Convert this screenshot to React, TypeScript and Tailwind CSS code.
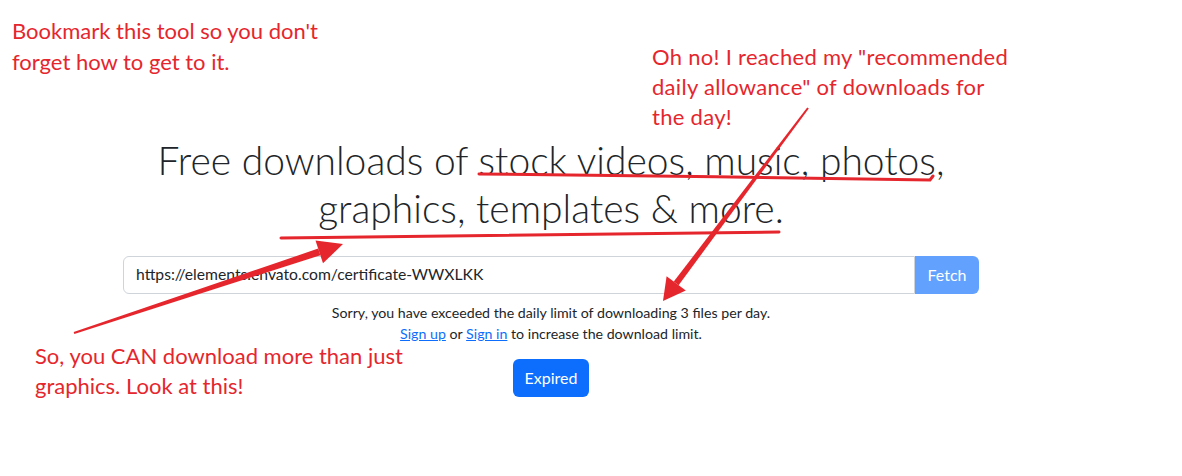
import React from "react";

const RED = "#e5262d";

function Annotations() {
  return (
    <svg
      className="pointer-events-none absolute inset-0"
      width={1182}
      height={476}
      viewBox="0 0 1182 476"
    >
      {/* underline: stock videos, music, photos */}
      <path
        d="M479 174 C 600 176, 800 177, 930 180 L 933 176"
        fill="none"
        stroke={RED}
        strokeWidth={3}
        strokeLinecap="round"
      />
      {/* underline: graphics, templates & more */}
      <path
        d="M281 238 L 779 232"
        fill="none"
        stroke={RED}
        strokeWidth={3}
        strokeLinecap="round"
      />
      {/* arrow to the heading */}
      <polygon
        fill={RED}
        points="74.3,334 73.7,332 318.2,248.6 320.4,255.2"
      />
      <polygon fill={RED} points="343,244 315.5,240.5 323,263.3" />
      {/* arrow to the limit message */}
      <polygon
        fill={RED}
        points="807.2,107.4 808.8,108.6 678.6,285.2 673.8,281.6"
      />
      <polygon fill={RED} points="663,301 666.6,276.2 685.8,290.6" />
    </svg>
  );
}

export default function App() {
  return (
    <div className="relative h-[476px] w-[1182px] overflow-hidden bg-white font-['Lato',sans-serif] text-[#212529]">
      <div className="mx-auto w-[960px] px-3 pt-[136px]">
        <div className="w-[856px] text-center">
          <h1 className="mb-6 text-[39px] leading-[48px] font-light">
            Free downloads of stock videos, music, photos,
            <br />
            graphics, templates &amp; more.
          </h1>

          <div className="flex h-[38px]">
            <input
              readOnly
              value="https://elements.envato.com/certificate-WWXLKK"
              className="min-w-0 flex-1 rounded-l-md border border-[#ced4da] bg-white px-3 text-[15.7px] text-[#212529] outline-none"
            />
            <button className="w-16 rounded-r-md bg-[#62a1fe] text-base text-white">
              Fetch
            </button>
          </div>

          <div className="mt-2 text-[14.2px] leading-[21px]">
            <p>
              Sorry, you have exceeded the daily limit of downloading 3 files
              per day.
            </p>
            <p>
              <a href="#" className="text-[#0d6efd] underline">
                Sign up
              </a>{" "}
              or{" "}
              <a href="#" className="text-[#0d6efd] underline">
                Sign in
              </a>{" "}
              to increase the download limit.
            </p>
          </div>

          <button className="mt-[15px] h-[38px] rounded-md bg-[#0d6efd] px-3 text-base text-white">
            Expired
          </button>
        </div>
      </div>

      {/* annotations */}
      <p className="absolute top-[15px] left-3 text-[22px] leading-[31px] text-[#e5262d]">
        Bookmark this tool so you don't
        <br />
        forget how to get to it.
      </p>
      <p className="absolute top-[42px] left-[652px] text-[22px] leading-[30px] tracking-[0.3px] text-[#e5262d]">
        Oh no! I reached my "recommended
        <br />
        daily allowance" of downloads for
        <br />
        the day!
      </p>
      <p className="absolute top-[341px] left-[35px] text-[22px] leading-[30px] text-[#e5262d]">
        So, you CAN download more than just
        <br />
        graphics. Look at this!
      </p>

      <Annotations />
    </div>
  );
}
